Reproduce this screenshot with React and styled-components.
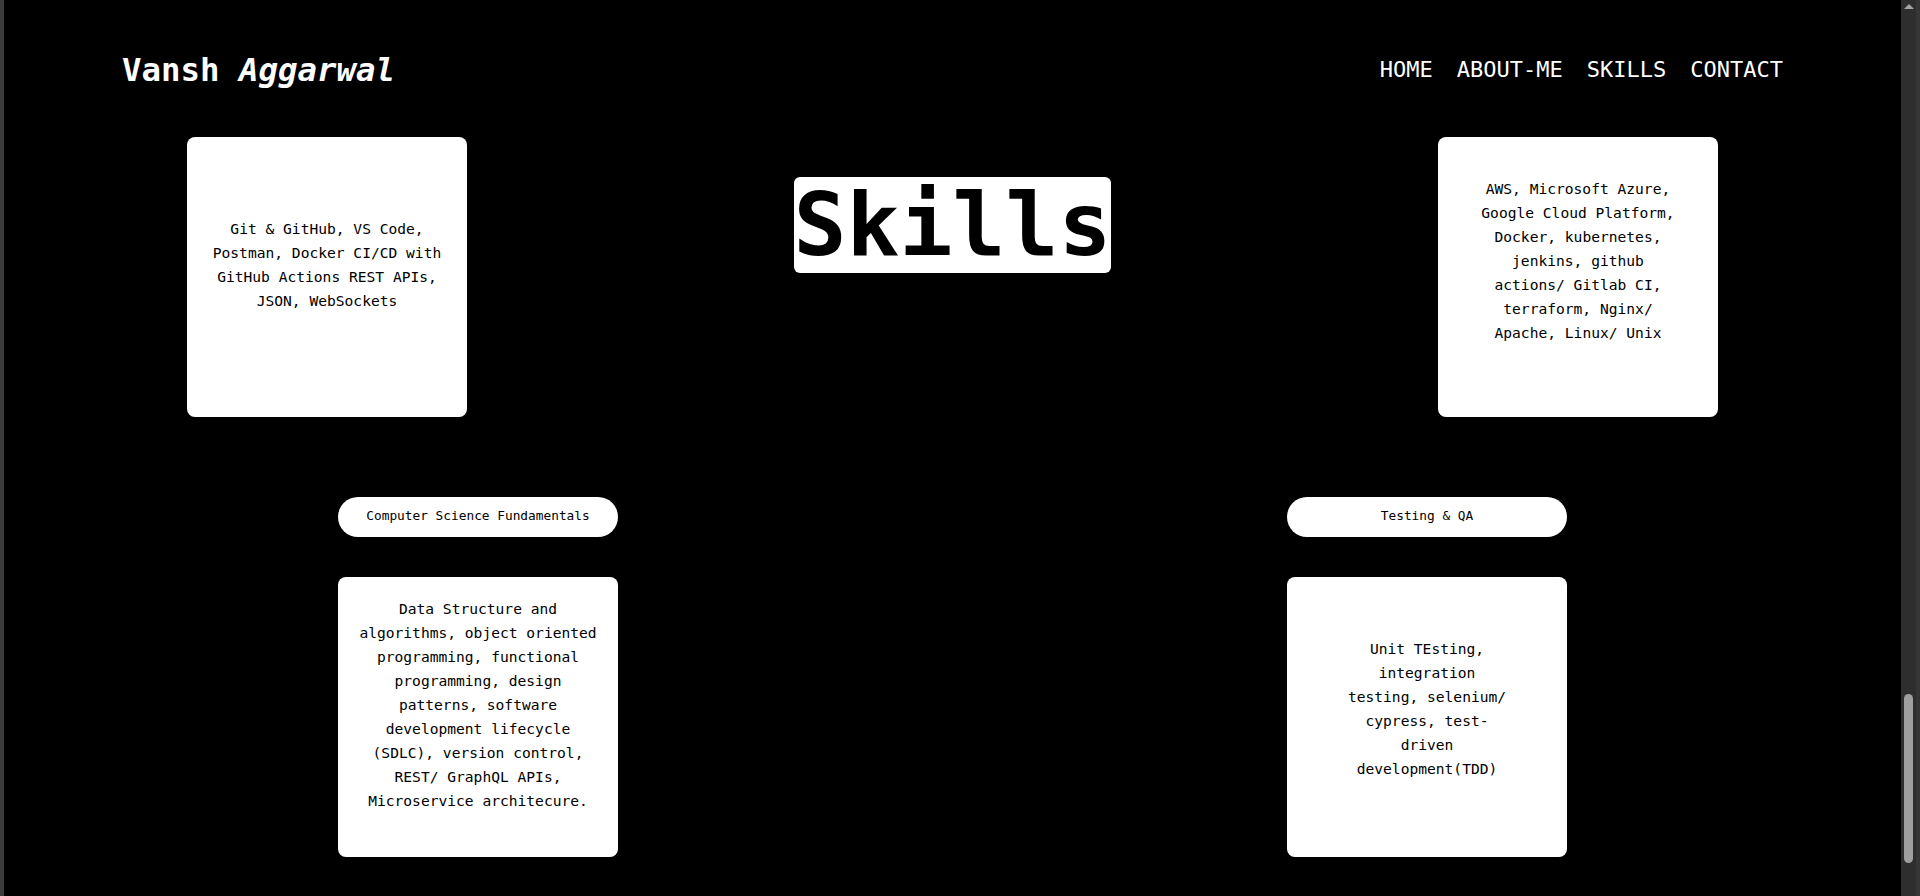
import React from "react";
import styled, { createGlobalStyle } from "styled-components";

const GlobalStyle = createGlobalStyle`
  html, body {
    margin: 0;
    padding: 0;
    height: 896px;
    overflow: hidden;
    background: #000;
  }
  body {
    font-family: "DejaVu Sans Mono", "Liberation Mono", monospace;
  }
  * { box-sizing: border-box; }
`;

const Frame = styled.div`
  display: flex;
  height: 896px;
  background: #000;
  border-left: 4px solid #3b3b3b;
`;

const Page = styled.main`
  flex: 1;
  display: flex;
  flex-direction: column;
  min-width: 0;
`;

const Header = styled.header`
  display: flex;
  align-items: center;
  justify-content: space-between;
  height: 40px;
  margin-top: 50px;
  padding: 0 118px;
`;

const Logo = styled.div`
  color: #fff;
  font-size: 32.4px;
  line-height: 40px;
  font-weight: 700;
  white-space: pre;
`;

const LogoAccent = styled.em`
  font-style: italic;
`;

const Nav = styled.nav`
  display: flex;
  align-items: center;
  gap: 24px;
`;

const NavLink = styled.a`
  color: #fff;
  font-size: 22px;
  line-height: 40px;
  text-decoration: none;
`;

const TopRow = styled.section`
  display: flex;
  justify-content: space-between;
  align-items: flex-start;
  margin-top: 47px;
  padding: 0 183px;
`;

const Title = styled.h1`
  margin: 40px 0 0;
  background: #fff;
  color: #000;
  font-size: 88px;
  font-weight: 700;
  line-height: 96px;
  height: 96px;
  border-radius: 6px;
  white-space: nowrap;
`;

const BottomRow = styled.section`
  display: flex;
  justify-content: space-between;
  margin-top: 80px;
  padding: 0 334px;
`;

const Column = styled.div`
  display: flex;
  flex-direction: column;
  gap: 40px;
  width: 280px;
`;

const Pill = styled.div`
  height: 40px;
  padding-bottom: 4px;
  border-radius: 20px;
  background: #fff;
  color: #000;
  display: flex;
  align-items: center;
  justify-content: center;
  font-size: 12.8px;
`;

const Card = styled.div`
  width: 280px;
  height: 280px;
  background: #fff;
  border-radius: 8px;
  display: flex;
  flex-direction: column;
  align-items: center;
  padding-top: ${(p) => p.$top}px;
`;

const CardText = styled.p`
  margin: 0;
  width: ${(p) => p.$width}px;
  color: #000;
  font-size: 14.6px;
  line-height: 24px;
  text-align: center;
`;

const Scrollbar = styled.div`
  width: 19px;
  background: #2e2e2e;
  border-right: 4px solid #363636;
  display: flex;
  flex-direction: column;
  align-items: center;
`;

const ScrollArrow = styled.div`
  width: 0;
  height: 0;
  margin-top: 4px;
  border-left: 5px solid transparent;
  border-right: 5px solid transparent;
  border-bottom: 5px solid #a3a3a3;
`;

const ScrollThumb = styled.div`
  margin-top: auto;
  margin-bottom: 33px;
  width: 9px;
  height: 169px;
  border-radius: 5px;
  background: #9f9f9f;
`;

export default function App() {
  return (
    <>
      <GlobalStyle />
      <Frame>
        <Page>
          <Header>
            <Logo>
              Vansh <LogoAccent>Aggarwal</LogoAccent>
            </Logo>
            <Nav>
              <NavLink href="#home">HOME</NavLink>
              <NavLink href="#about">ABOUT-ME</NavLink>
              <NavLink href="#skills">SKILLS</NavLink>
              <NavLink href="#contact">CONTACT</NavLink>
            </Nav>
          </Header>

          <TopRow>
            <Card $top={80}>
              <CardText $width={240}>
                Git &amp; GitHub, VS Code, Postman, Docker CI/CD with GitHub
                Actions REST APIs, JSON, WebSockets
              </CardText>
            </Card>
            <Title>Skills</Title>
            <Card $top={40}>
              <CardText $width={205}>
                AWS, Microsoft Azure, Google Cloud Platform, Docker,
                kubernetes, jenkins, github actions/ Gitlab CI, terraform,
                Nginx/ Apache, Linux/ Unix
              </CardText>
            </Card>
          </TopRow>

          <BottomRow>
            <Column>
              <Pill>Computer Science Fundamentals</Pill>
              <Card $top={20}>
                <CardText $width={240}>
                  Data Structure and algorithms, object oriented programming,
                  functional programming, design patterns, software development
                  lifecycle (SDLC), version control, REST/ GraphQL APIs,
                  Microservice architecure.
                </CardText>
              </Card>
            </Column>
            <Column>
              <Pill>Testing &amp; QA</Pill>
              <Card $top={60}>
                <CardText $width={170}>
                  Unit TEsting, integration testing, selenium/ cypress,
                  test-driven development(TDD)
                </CardText>
              </Card>
            </Column>
          </BottomRow>
        </Page>
        <Scrollbar>
          <ScrollArrow />
          <ScrollThumb />
        </Scrollbar>
      </Frame>
    </>
  );
}
